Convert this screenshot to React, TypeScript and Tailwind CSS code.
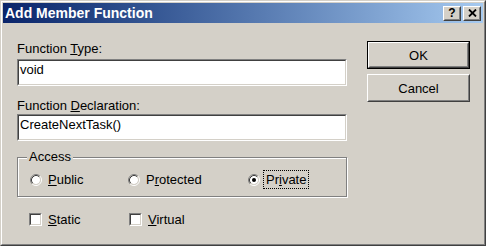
import React from 'react'

const Radio = ({ checked }: { checked?: boolean }) => (
    <svg width="12" height="12" viewBox="0 0 12 12" className="shrink-0">
        <circle cx="6" cy="6" r="4" fill="#ffffff" />
        <path d="M2.11 9.89 A5.5 5.5 0 0 1 9.89 2.11" stroke="#808080" fill="none" />
        <path d="M9.89 2.11 A5.5 5.5 0 0 1 2.11 9.89" stroke="#ffffff" fill="none" />
        <path d="M2.82 9.18 A4.5 4.5 0 0 1 9.18 2.82" stroke="#404040" fill="none" />
        <path d="M9.18 2.82 A4.5 4.5 0 0 1 2.82 9.18" stroke="#d4d0c8" fill="none" />
        {checked && <circle cx="6" cy="6" r="2" fill="#000000" />}
    </svg>
)

const CheckBox = () => (
    <span className="block w-[13px] h-[13px] shrink-0 border border-[#808080] border-r-white border-b-white">
        <span className="block w-full h-full border border-[#404040] border-r-[#d4d0c8] border-b-[#d4d0c8] bg-white" />
    </span>
)

const TextBox = ({ value }: { value: string }) => (
    <div className="h-[27px] border border-[#808080] border-r-white border-b-white">
        <div className="h-full border border-[#404040] border-r-[#d4d0c8] border-b-[#d4d0c8] bg-white pl-px pt-px leading-[16px]">
            {value}
        </div>
    </div>
)

const Button = ({ label, isDefault }: { label: string; isDefault?: boolean }) => (
    <div className={isDefault ? 'h-[28px] border border-black' : 'h-[28px]'}>
        <div className="h-full border border-white border-r-[#404040] border-b-[#404040]">
            <div className="h-full flex items-center justify-center border border-[#d4d0c8] border-r-[#808080] border-b-[#808080]">
                {label}
            </div>
        </div>
    </div>
)

const TitleButton = ({ children }: { children: React.ReactNode }) => (
    <div className="w-[18px] h-[15px] bg-[#d4d0c8] border border-white border-r-[#404040] border-b-[#404040]">
        <div className="h-full flex items-center justify-center border border-[#d4d0c8] border-r-[#808080] border-b-[#808080]">
            {children}
        </div>
    </div>
)

export default function App() {
    return (
        <div className="w-[486px] h-[246px] bg-[#d4d0c8] border border-[#d4d0c8] border-r-[#404040] border-b-[#404040] font-['Liberation_Sans',Arial,sans-serif] text-[13px] leading-[15px] text-black">
            <div className="h-full border border-white border-r-[#808080] border-b-[#808080] p-px flex flex-col">
                {/* title bar */}
                <div className="h-[20px] shrink-0 flex items-center bg-linear-to-r from-[#0a246a] to-[#a6caf0] pl-[2px] pr-[2px]">
                    <span className="text-white font-bold text-[14px] leading-[16px]">Add Member Function</span>
                    <div className="ml-auto flex gap-[2px]">
                        <TitleButton>
                            <span className="font-bold text-[12px] leading-[12px]">?</span>
                        </TitleButton>
                        <TitleButton>
                            <svg width="9" height="8" viewBox="0 0 9 8">
                                <path d="M1 0.5 L8 7.5 M8 0.5 L1 7.5" stroke="#000" strokeWidth="1.8" />
                            </svg>
                        </TitleButton>
                    </div>
                </div>

                <div className="flex pl-[14px]">
                    <div className="w-[330px]">
                        <div className="mt-[18px]">Function <u>T</u>ype:</div>
                        <div className="mt-[3px]">
                            <TextBox value="void" />
                        </div>
                        <div className="mt-[12px]">Function <u>D</u>eclaration:</div>
                        <div className="mt-px">
                            <TextBox value="CreateNextTask()" />
                        </div>

                        <div className="relative mt-[16px] h-[40px] border border-[#808080] shadow-[inset_1px_1px_0_#ffffff,1px_1px_0_#ffffff] pl-[12px] pt-[12px]">
                            <span className="absolute left-[9px] top-[-9px] bg-[#d4d0c8] px-[2px]">Access</span>
                            <div className="flex items-center">
                                <div className="w-[98px] flex items-center">
                                    <Radio />
                                    <span className="ml-[3px] px-[2px] py-px border border-transparent"><u>P</u>ublic</span>
                                </div>
                                <div className="w-[120px] flex items-center">
                                    <Radio />
                                    <span className="ml-[3px] px-[2px] py-px border border-transparent">P<u>r</u>otected</span>
                                </div>
                                <div className="flex items-center">
                                    <Radio checked />
                                    <span className="ml-[3px] px-[2px] py-px border border-dotted border-black">Pr<u>i</u>vate</span>
                                </div>
                            </div>
                        </div>

                        <div className="mt-[13px] pl-[12px] flex items-center">
                            <div className="w-[100px] flex items-center">
                                <CheckBox />
                                <span className="ml-[3px] px-[2px] py-px border border-transparent"><u>S</u>tatic</span>
                            </div>
                            <div className="flex items-center">
                                <CheckBox />
                                <span className="ml-[3px] px-[2px] py-px border border-transparent"><u>V</u>irtual</span>
                            </div>
                        </div>
                    </div>

                    <div className="w-[103px] ml-[20px] pt-[18px]">
                        <Button label="OK" isDefault />
                        <div className="mt-[5px]">
                            <Button label="Cancel" />
                        </div>
                    </div>
                </div>
            </div>
        </div>
    )
}
